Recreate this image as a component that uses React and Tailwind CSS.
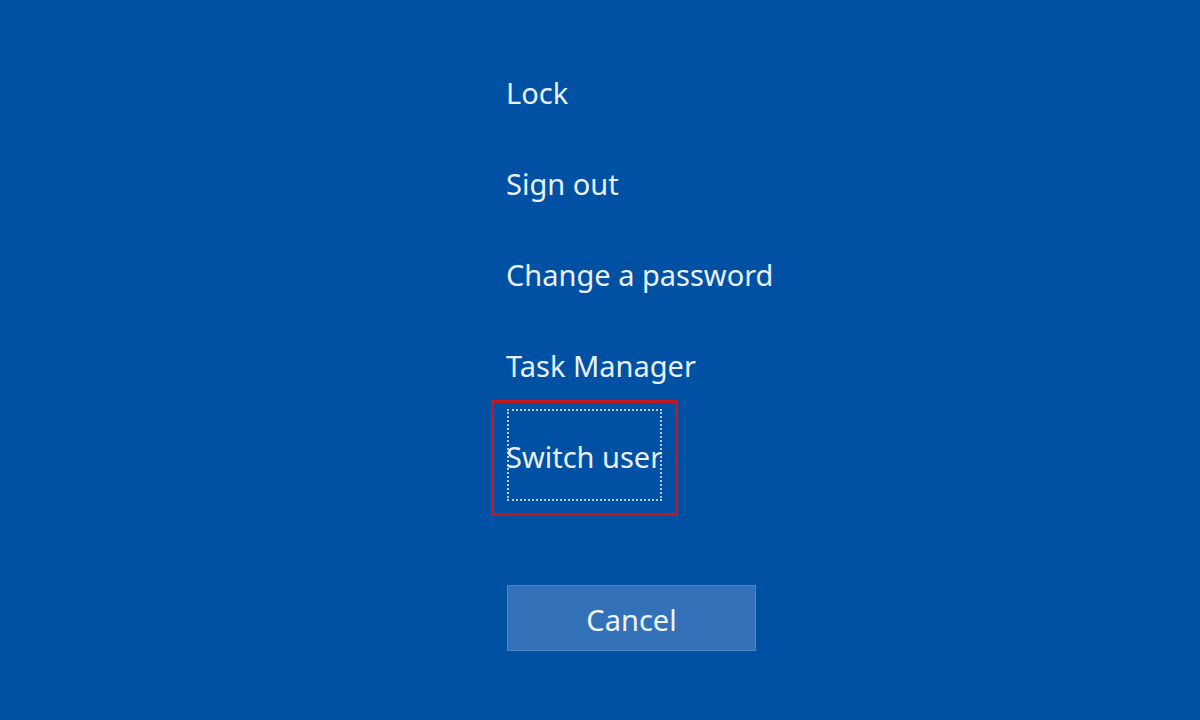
import React from 'react'

const items = ['Lock', 'Sign out', 'Change a password', 'Task Manager']

export default function App() {
  return (
    <div
      className="w-[1200px] h-[720px] bg-[#0050a3] overflow-hidden flex flex-col pl-[506px] pt-[68px]"
      style={{ fontFamily: '"Noto Sans", "Open Sans", sans-serif' }}
    >
      {items.map((t) => (
        <div key={t} className="h-[91px] text-[29px] leading-[50px] text-[#e8f0fa]">
          {t}
        </div>
      ))}

      {/* highlighted option with focus ring */}
      <div className="-ml-[15px] -mt-[32px] w-[187px] h-[116px] border-[3px] border-[#c4161f] pt-[6px] pl-[13px]">
        <div className="w-[155px] h-[92px] border-2 border-dotted border-[#b9c7d9] flex items-center pt-[4px] overflow-visible">
          <span className="text-[29px] leading-[50px] text-[#e8f0fa] -ml-[3px] whitespace-nowrap">Switch user</span>
        </div>
      </div>

      <button className="mt-[69px] ml-[1px] w-[249px] h-[66px] bg-[#3372b8] border border-[#4c86c4] text-[29px] text-[#eef4fb] pt-[3px]">
        Cancel
      </button>
    </div>
  )
}
